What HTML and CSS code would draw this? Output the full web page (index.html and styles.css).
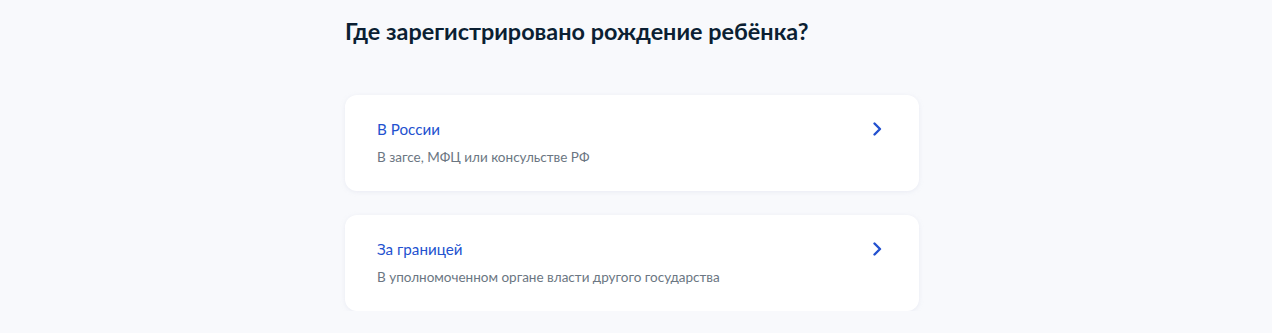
FILE: index.html
```html
<!DOCTYPE html>
<html lang="ru">
<head>
    <title>Где зарегистрировано рождение ребёнка?</title>
    <link rel="stylesheet" href="styles.css">
</head>
<body>
    <div class="page">
        <h2 class="question">Где зарегистрировано рождение ребёнка?</h2>

        <div class="options">
            <a class="option" href="#">
                <div class="option-text">
                    <div class="option-title">В России</div>
                    <div class="option-hint">В загсе, МФЦ или консульстве РФ</div>
                </div>
                <svg class="chevron" viewBox="0 0 10 16">
                    <path d="M2.5 2.5 L8 8 L2.5 13.5"/>
                </svg>
            </a>

            <a class="option" href="#">
                <div class="option-text">
                    <div class="option-title">За границей</div>
                    <div class="option-hint">В уполномоченном органе власти другого государства</div>
                </div>
                <svg class="chevron" viewBox="0 0 10 16">
                    <path d="M2.5 2.5 L8 8 L2.5 13.5"/>
                </svg>
            </a>
        </div>
    </div>
</body>
</html>
```

FILE: styles.css
```css
body {
    margin: 0;
    background: #f8f9fc;
    font-family: Lato, "Open Sans", sans-serif;
    color: #0b1f33;
}

.page {
    width: 574px;
    margin: 0 auto;
    padding-top: 15px;
    transform: translateX(-4px);
}

.question {
    margin: 0 0 48px;
    font-size: 23.4px;
    line-height: 32px;
    font-weight: 700;
}

.options {
    display: flex;
    flex-direction: column;
    gap: 24px;
}

.option {
    display: flex;
    align-items: flex-start;
    justify-content: space-between;
    height: 96px;
    box-sizing: border-box;
    padding: 24px 37px 0 32px;
    background: #ffffff;
    border-radius: 12px;
    box-shadow: 0 1px 4px rgba(226, 230, 240, 0.7);
    text-decoration: none;
}

.option-title {
    font-size: 15.2px;
    line-height: 20px;
    color: #2351cf;
}

.option-hint {
    margin-top: 10px;
    font-size: 13.5px;
    line-height: 16px;
    color: #6b7682;
}

.chevron {
    width: 10px;
    height: 16px;
    margin-top: 2px;
    fill: none;
    stroke: #2351cf;
    stroke-width: 2.4;
    stroke-linecap: round;
    stroke-linejoin: round;
}
```
